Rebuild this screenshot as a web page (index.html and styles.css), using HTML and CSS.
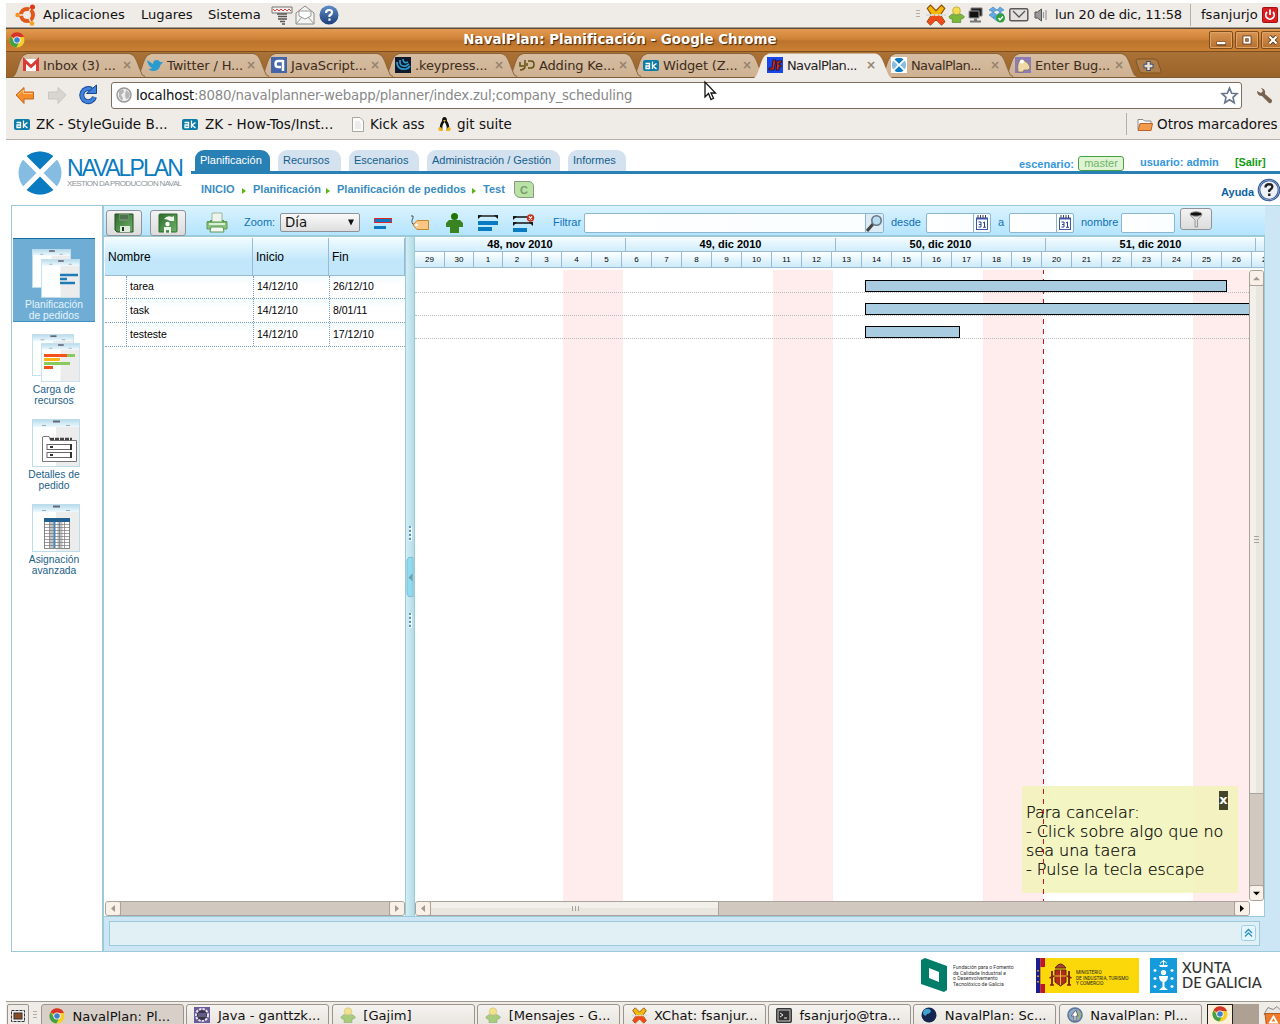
FILE: index.html
```html
<!DOCTYPE html>
<html lang="es">
<head>
<meta charset="utf-8">
<title>NavalPlan: Planificación</title>
<link rel="stylesheet" href="styles.css">
</head>
<body>
<svg class="sprite" width="0" height="0">
  <defs>
    <linearGradient id="tabFill" x1="0" y1="0" x2="0" y2="1"><stop offset="0" stop-color="#d6bda2"/><stop offset="1" stop-color="#ceb191"/></linearGradient>
    <linearGradient id="thumbHead" x1="0" y1="0" x2="0" y2="1"><stop offset="0" stop-color="#b9dcec"/><stop offset="1" stop-color="#eef9fe"/></linearGradient>
    <linearGradient id="help" x1="0" y1="0" x2="0" y2="1"><stop offset="0" stop-color="#5f8dc8"/><stop offset="1" stop-color="#1d3f7a"/></linearGradient>
    <linearGradient id="green" x1="0" y1="0" x2="1" y2="1"><stop offset="0" stop-color="#2f6a2c"/><stop offset="1" stop-color="#6fb36a"/></linearGradient>
  </defs>
  <symbol id="tab" viewBox="0 0 138 25"><path d="M0 25C5 23 6 5 12 2L15 1H121C127 1 129 8 132 16L135 23L138 25Z" fill="url(#tabFill)"/><path d="M0 24.5C5 23 6 5 12 2L15 .5H121C127 1 129 8 132 16L135 23L138 24.5" fill="none" stroke="#8a6237"/></symbol>
  <symbol id="tab-on" viewBox="0 0 138 25"><path d="M0 25C5 23 6 5 12 2L15 .5H121C127 1 129 8 132 16L135 23L138 25Z" fill="#efebe7"/></symbol>
  <symbol id="chrome" viewBox="0 0 16 16"><circle cx="8" cy="8" r="7.5" fill="#f4cf2b"/><path d="M8 8L1.5 4.2A7.5 7.5 0 0 1 15 5H8Z" fill="#d8352a"/><path d="M1.5 4.2A7.5 7.5 0 0 0 7.3 15.5L10.6 9.5L5.4 9.5Z" fill="#43a047"/><circle cx="8" cy="8" r="3.6" fill="#fff"/><circle cx="8" cy="8" r="2.8" fill="#3f7fd0"/></symbol>
  <symbol id="zk" viewBox="0 0 16 11"><rect width="16" height="11" rx="2" fill="#0b7ba8"/><path d="M2.500 3.500H6.500V8.500H3V6H6.500M9.500 1.500V9M13.500 3.500L10 6L13.500 9" fill="none" stroke="#fff" stroke-width="1.300"/></symbol>
  <symbol id="naval" viewBox="0 0 44 44"><circle cx="22" cy="22" r="21.500" fill="#85bde2"/><path d="M22 22L7 6.500A21.500 21.500 0 0 1 37 6.500ZM22 22L7 37.500A21.500 21.500 0 0 0 37 37.500Z" fill="#0a7bc0"/><path d="M5 5L39 39M39 5L5 39" stroke="#fff" stroke-width="5"/></symbol>
  <symbol id="xchat" viewBox="0 0 20 20"><path d="M2 4L5 1L10 6L15 1L18 4L14 10L18 16L15 19L10 14L5 19L2 16L6 10Z" fill="#f5b90a" stroke="#8b4a10"/><path d="M6.500 10.500H13.500L18 16L15 19L10 14L5 19L2 16Z" fill="#ee4a1c"/><path d="M1 10H19" stroke="#d8d8d8" stroke-width="2" stroke-dasharray="3 1"/></symbol>
  <symbol id="gajim" viewBox="0 0 16 16"><circle cx="8" cy="4.500" r="3.700" fill="#f3dc52" stroke="#b59b25" stroke-width=".6"/><path d="M.8 10L4 7.500Q8 10 12 7.500L15.500 10L14 12H12V15.500H4V12H2Z" fill="#7cb93a" stroke="#4f8421" stroke-width=".6"/></symbol>
  <symbol id="mail" viewBox="0 0 20 14"><rect x=".8" y=".8" width="18" height="12" rx="1.500" fill="#e4e2de" stroke="#5a5a58" stroke-width="1.500"/><path d="M4 3L10 9L16 3" fill="none" stroke="#555" stroke-width="1.300"/></symbol>
  <symbol id="sheet" viewBox="0 0 48 48"><rect x=".5" y=".5" width="47" height="47" fill="#fdfefe" stroke="#bcdcea"/><rect x="24" y="8" width="23" height="39" fill="#ececec"/><rect x="1" y="1" width="46" height="7" fill="url(#thumbHead)"/><path d="M21 2.500H28" stroke="#667" stroke-width="2"/><path d="M10 6.500H14M34 6.500H38" stroke="#9ab"/></symbol>
  <symbol id="cal" viewBox="0 0 12 15"><rect x=".5" y="3.500" width="11" height="11" fill="#fff" stroke="#3f57a6"/><path d="M0 3.500H12" stroke="#3f57a6" stroke-width="2"/><path d="M2 0V3M4.500 0V3M7 0V3M9.500 0V3" stroke="#445"/><path d="M2.500 7H5V12H2.500M3 9.500H5M7 8L8.500 7V12M7 12.300H10" fill="none" stroke="#2b418f"/></symbol>
</svg>

<header class="panel">
  <svg class="ic" width="22" height="22" viewBox="0 0 22 22"><circle cx="12" cy="11" r="6" fill="none" stroke="#e2571c" stroke-width="4"/><path d="M12 11L3 11M12 11L17 2M12 11L17 20" stroke="#efebe7" stroke-width="1.500"/><circle cx="2.500" cy="11" r="2.200" fill="#f0941e"/><circle cx="17.500" cy="3" r="2.500" fill="#d93a16"/><circle cx="17" cy="19.500" r="2.300" fill="#f3a21b"/></svg>
  <span>Aplicaciones</span><span>Lugares</span><span>Sistema</span>
  <svg class="ic" width="22" height="20" viewBox="0 0 22 20"><path d="M1 2H21V8H1Z" fill="#f3f1ee" stroke="#777"/><path d="M2 4L4 6L6 4L8 6L10 4L12 6L14 4L16 6L18 4L20 6" fill="none" stroke="#d44"/><path d="M6 9H16M7 11.500H16M7 14H16M9 16.500H14M11 19H14" stroke="#555" stroke-width="1.700"/></svg>
  <svg class="ic" width="20" height="20" viewBox="0 0 20 20"><path d="M1 8L10 1L19 8V19H1Z" fill="#f5f5f3" stroke="#8a8a88"/><path d="M4 6H16V11L10 14L4 11ZM1 19L7 12M19 19L13 12" fill="#fff" stroke="#999"/></svg>
  <svg class="ic" width="20" height="20" viewBox="0 0 20 20"><circle cx="10" cy="10" r="9.500" fill="url(#help)"/><path d="M7 8Q7 5 10 5Q13.200 5 13 7.500Q13 9 10.500 10.500V12M10.500 13.500V15.800" fill="none" stroke="#fff" stroke-width="2.200"/></svg>
  <i class="grip"></i>
  <svg class="ic" width="22" height="22"><use href="#xchat"/></svg>
  <svg class="ic" width="17" height="17"><use href="#gajim"/></svg>
  <svg class="ic" width="15" height="16" viewBox="0 0 15 16"><path d="M3 1H14V9H3Z" fill="#222" stroke="#777"/><path d="M1 4H11V11H1Z" fill="#111" stroke="#999"/><path d="M2 14.500H13M6 12.500H9" stroke="#777" stroke-width="2"/></svg>
  <svg class="ic" width="18" height="17" viewBox="0 0 18 17"><path d="M5 1L9 4L5 6L1 4ZM12 1L16 4L12 6L9 4ZM5 6L9 9L5 12L1 9ZM12 6L16 9L12 12L9 9ZM5 12L9 10L12 13L9 15Z" fill="#63abe0" stroke="#3b83bd" stroke-width=".6"/><circle cx="12.500" cy="12" r="4.500" fill="#2f9e3c"/><path d="M10.500 12L12 14L15 10.500" fill="none" stroke="#fff" stroke-width="1.400"/></svg>
  <svg class="ic" width="20" height="14"><use href="#mail"/></svg>
  <svg class="ic" width="14" height="16" viewBox="0 0 14 16"><path d="M1 5H3.500L7.500 2V14L3.500 11H1Z" fill="#999" stroke="#555"/><path d="M9.500 5V11M12 3V13" stroke="#999" stroke-width="1.200"/></svg>
  <span class="clock">lun 20 de dic, 11:58</span><i class="vsep"></i><span>fsanjurjo</span>
  <svg class="ic" width="16" height="16" viewBox="0 0 16 16"><rect x=".5" y=".5" width="15" height="15" rx="1" fill="#d81e22" stroke="#a31113"/><path d="M5 5A4.200 4.200 0 1 0 11 5M8 2.500V8" fill="none" stroke="#fff" stroke-width="1.800"/></svg>
</header>

<div class="titlebar">
  <svg class="ic" width="16" height="16"><use href="#chrome"/></svg>
  <b>NavalPlan: Planificación - Google Chrome</b>
  <svg class="winbtn" viewBox="0 0 24 18"><path d="M7 13H17.500" stroke="#5d3611" stroke-width="4.500"/><path d="M7.500 12.500H17" stroke="#fff" stroke-width="2.600"/></svg>
  <svg class="winbtn" viewBox="0 0 24 18"><rect x="9" y="6" width="6" height="6" fill="none" stroke="#5d3611" stroke-width="4"/><rect x="9" y="6" width="6" height="6" fill="none" stroke="#fff" stroke-width="2.200"/></svg>
  <svg class="winbtn" viewBox="0 0 24 18"><path d="M8 5L16 13M16 5L8 13" stroke="#5d3611" stroke-width="4.500"/><path d="M8 5L16 13M16 5L8 13" stroke="#fff" stroke-width="2.500"/></svg>
</div>

<nav class="tabs">
  <div class="tab t1"><svg class="shape"><use href="#tab"/></svg><div class="in"><svg width="16" height="12" viewBox="0 0 16 12"><rect width="16" height="12" fill="#fff"/><path d="M1.500 12V1.500L8 7.500L14.500 1.500V12" fill="none" stroke="#d93a35" stroke-width="3"/></svg><span>Inbox (3) ...</span><em>×</em></div></div>
  <div class="tab t2"><svg class="shape"><use href="#tab"/></svg><div class="in"><svg width="16" height="16" viewBox="0 0 16 16"><path d="M0 3L6 7Q6 3 10 3Q12 3 13 5L16 5L13.500 8Q12 14 6 14Q3 14 1.500 12Q4 12 5 11Q1 9 0 3Z" fill="#2a9bd0"/></svg><span>Twitter / H...</span><em>×</em></div></div>
  <div class="tab t3"><svg class="shape"><use href="#tab"/></svg><div class="in"><svg width="16" height="16" viewBox="0 0 16 16"><rect width="16" height="16" fill="#4465a8"/><path d="M12 3V14M12 4H7Q4.500 4 4.500 7Q4.500 10 7 10H10" fill="none" stroke="#fff" stroke-width="2.500"/></svg><span>JavaScript...</span><em>×</em></div></div>
  <div class="tab t4"><svg class="shape"><use href="#tab"/></svg><div class="in"><svg width="16" height="16" viewBox="0 0 16 16"><rect width="16" height="16" fill="#0e1a2c"/><path d="M2 5Q2 13 11 12Q14 11 15 9M5 3Q4 10 11 9L14 7M8 2Q8 7 13 5" fill="none" stroke="#2e9bd0" stroke-width="1.700"/></svg><span>.keypress...</span><em>×</em></div></div>
  <div class="tab t5"><svg class="shape"><use href="#tab"/></svg><div class="in"><svg width="16" height="12" viewBox="0 0 16 12"><path d="M1 3V7H5M6 1V8Q5 11 1 11M8 7V4M9 2H12Q15 2 15 5.500Q15 9 12 9H9" fill="none" stroke="#62510f" stroke-width="1.500"/></svg><span>Adding Ke...</span><em>×</em></div></div>
  <div class="tab t6"><svg class="shape"><use href="#tab"/></svg><div class="in"><svg width="16" height="11"><use href="#zk"/></svg><span>Widget (Z...</span><em>×</em></div></div>
  <div class="tab on"><svg class="shape"><use href="#tab-on"/></svg><div class="in"><svg width="16" height="16" viewBox="0 0 16 16"><rect width="16" height="16" fill="#1c45e8"/><path d="M6 3H9L7 13H2V11H5ZM10 4H15L14 6H12V8H14V10H12V13H9Z" fill="#d9271c" stroke="#111" stroke-width=".8"/></svg><span>NavalPlan...</span><em>×</em></div></div>
  <div class="tab t8"><svg class="shape"><use href="#tab"/></svg><div class="in"><svg width="16" height="16" viewBox="-2 -2 48 48"><rect x="-2" y="-2" width="48" height="48" fill="#fff"/><use href="#naval" width="44" height="44"/></svg><span>NavalPlan...</span><em>×</em></div></div>
  <div class="tab t9"><svg class="shape"><use href="#tab"/></svg><div class="in"><svg width="16" height="16" viewBox="0 0 16 16"><rect width="16" height="16" fill="#8d7bb5"/><path d="M3 15Q2 8 4 4Q7 1 10 4Q15 7 15 11Q14 14 9 13L8 15Z" fill="#efd9a8" stroke="#6b5a35" stroke-width=".6"/><circle cx="7" cy="4.500" r="2" fill="#fff"/></svg><span>Enter Bug...</span><em>×</em></div></div>
  <svg class="newtab" width="27" height="16" viewBox="0 0 27 16"><path d="M3 1H19Q22 1 23 4L26 13Q26 15 24 15H8Q5 15 4 12L1 3Q1 1 3 1Z" fill="#ad7d4b" stroke="#80551f"/><path d="M13.500 3V13M8.500 8H18.500" stroke="#45506b" stroke-width="4.500"/><path d="M13.500 4V12M9.500 8H17.500" stroke="#e8dfd5" stroke-width="2.500"/></svg>
</nav>

<div class="navrow">
  <svg class="ic" width="20" height="19" viewBox="0 0 20 19"><path d="M1 9L9 1.500V6H18.500V13H9V17.500Z" fill="#f58d2a" stroke="#c5661a"/><path d="M3 9L8.500 4V7.500H17.500" fill="none" stroke="#fbc486"/></svg>
  <svg class="ic" width="20" height="19" viewBox="0 0 20 19"><path d="M19 9L11 1.500V6H1.500V13H11V17.500Z" fill="#d9d6d2" stroke="#c9c5c0"/></svg>
  <svg class="ic" width="20" height="22" viewBox="0 0 20 22"><path d="M13.500 5.500A6.500 6.500 0 1 0 16.500 13" fill="none" stroke="#17448e" stroke-width="5"/><path d="M13.500 5.500A6.500 6.500 0 1 0 16.500 13" fill="none" stroke="#3f83dd" stroke-width="3.200"/><path d="M8.500 9.500H18.500V1Z" fill="#3f83dd" stroke="#17448e"/></svg>
  <div class="omni">
    <svg width="16" height="16" viewBox="0 0 16 16"><circle cx="8" cy="8" r="7" fill="#eee" stroke="#999" stroke-width="1.500"/><path d="M3 4L7 2L8 5L5 8L7 11L6 14L3 10ZM10 3L14 6L13 11L10 12L9 8Z" fill="#b5b5b5"/></svg>
    <span><b>localhost</b>:8080/navalplanner-webapp/planner/index.zul;company_scheduling</span>
    <svg width="17" height="17" viewBox="0 0 17 17"><path d="M8.500 1L10.700 6.200L16 6.600L12 10.300L13.200 15.700L8.500 12.800L3.800 15.700L5 10.300L1 6.600L6.300 6.200Z" fill="#fff" stroke="#66748c" stroke-width="1.600"/></svg>
  </div>
  <svg class="ic" width="17" height="17" viewBox="0 0 17 17"><path d="M1 4Q1 9 6 9L13 16Q16 17 16 13L9 7Q10 2 5 1L7 4L5 6Z" fill="#78634e"/></svg>
  <svg class="cursor" width="13" height="21" viewBox="0 0 13 21"><path d="M1 1V16L4.500 12.500L7 18.500L9.500 17.300L7 12H11.500Z" fill="#fff" stroke="#111" stroke-width="1.300"/></svg>
</div>

<div class="marks">
  <svg class="ic" width="16" height="11"><use href="#zk"/></svg><span>ZK - StyleGuide B...</span>
  <svg class="ic" width="16" height="11"><use href="#zk"/></svg><span>ZK - How-Tos/Inst...</span>
  <svg class="ic" width="12" height="15" viewBox="0 0 12 15"><path d="M.5.5H8L11.500 4V14.500H.5Z" fill="#fbfbfa" stroke="#aaa69e"/><path d="M3 5H8M3 7H9M3 9H9M3 11H9" stroke="#ddd"/></svg><span>Kick ass</span>
  <svg class="ic" width="13" height="16" viewBox="0 0 13 16"><path d="M6.500 1Q9 1 9 5Q12 9 11 14H2Q1 9 4 5Q4 1 6.500 1Z" fill="#111"/><path d="M6.500 6Q9.500 10 8.500 14H4.500Q3.500 10 6.500 6Z" fill="#fff"/><path d="M0 12L3 11L5 15H1ZM13 12L10 11L8 15H12ZM5 4H8L6.500 6Z" fill="#f0b51a"/></svg><span>git suite</span>
  <i class="vsep"></i>
  <svg class="ic" width="16" height="13" viewBox="0 0 16 13"><path d="M1 11V1.500H6L7.500 3H14V6" fill="#fff" stroke="#888"/><path d="M3 5.500H15.500L14 12.500H1Z" fill="#f49a4c" stroke="#b5642a"/></svg><span>Otros marcadores</span>
</div>

<section class="apphead">
  <div class="logo">
    <svg width="44" height="44"><use href="#naval"/></svg>
    <div><strong>NAVALPLAN</strong><small>XESTION DA PRODUCCION NAVAL</small></div>
  </div>
  <div class="menu">
    <div class="menurow">
      <a class="m sel">Planificación</a><a class="m rec">Recursos</a><a class="m esc">Escenarios</a><a class="m adm">Administración / Gestión</a><a class="m inf">Informes</a>
      <div class="user"><b>escenario:</b><span class="master">master</span><b class="usr">usuario: admin</b><b class="exit">[Salir]</b></div>
    </div>
    <div class="crumbs">
      <b>INICIO</b><i></i><b>Planificación</b><i></i><b>Planificación de pedidos</b><i></i><b>Test</b><span class="cbox">C</span>
      <b class="help">Ayuda</b>
      <svg class="helpic" width="24" height="24" viewBox="0 0 24 24"><circle cx="12" cy="12" r="10" fill="#eef2f7" stroke="#2d5190" stroke-width="2.600"/><circle cx="12" cy="12" r="10" fill="none" stroke="#9db9dd" stroke-width=".8"/><path d="M8.500 9.500Q8.500 6.200 12 6.200Q15.500 6.200 15.300 9Q15.200 10.500 12.300 12.500V14M12.300 15.500V18" fill="none" stroke="#222" stroke-width="2.400"/></svg>
    </div>
  </div>
</section>

<main class="work">
  <aside class="side">
    <a class="item current">
      <svg width="48" height="48" viewBox="0 0 48 48"><use href="#sheet" width="39" height="39"/><use href="#sheet" x="9" y="10" width="39" height="39"/><path d="M28 26H46M28 30H35M28 34H43" stroke="#1d7cb8" stroke-width="2.400"/></svg>
      <span>Planificación<br>de pedidos</span></a>
    <a class="item">
      <svg width="48" height="48" viewBox="0 0 48 48"><use href="#sheet" width="42" height="42"/><use href="#sheet" x="9" y="9" width="39" height="39"/><path d="M12 21.500H35M12 33.500H21" stroke="#f4511e" stroke-width="3"/><path d="M35 21.500H43M12 29.500H38" stroke="#8bc95f" stroke-width="3"/><path d="M12 25.500H28" stroke="#fbb517" stroke-width="3"/></svg>
      <span>Carga de<br>recursos</span></a>
    <a class="item">
      <svg width="48" height="48" viewBox="0 0 48 48"><use href="#sheet"/><path d="M10.500 42.500V18L12 17.500H17L18.500 21.500H44.500V42.500Z" fill="#fff" stroke="#777"/><path d="M18 20H40" stroke="#444" stroke-width="2.500" stroke-dasharray="4 1"/><rect x="15" y="25.500" width="24" height="5" fill="#fff" stroke="#666"/><rect x="15" y="33.500" width="24" height="5" fill="#fff" stroke="#666"/><path d="M18 28H21M18 36H21M39 25V31M39 33V39" stroke="#333" stroke-width="2"/></svg>
      <span>Detalles de<br>pedido</span></a>
    <a class="item">
      <svg width="48" height="48" viewBox="0 0 48 48"><use href="#sheet"/><rect x="12.500" y="14.500" width="25" height="30" fill="#fff" stroke="#888"/><path d="M20 18V44M28 18V44" stroke="#c4c4c4" stroke-width="5"/><path d="M22.500 18V44" stroke="#3b8bd0" stroke-width="2"/><path d="M12 20.500H38M12 23.500H38M12 26.500H38M12 29.500H38M12 32.500H38M12 35.500H38M12 38.500H38M12 41.500H38M17.500 18V44M27.500 18V44M32.500 18V44" stroke="#777" stroke-width=".7"/><rect x="12" y="14" width="26" height="4" fill="#24608f"/></svg>
      <span>Asignación<br>avanzada</span></a>
  </aside>

  <div class="content">
    <div class="tools">
      <button class="btn"><svg width="20" height="20" viewBox="0 0 20 20"><path d="M1 1H19V19H3L1 17Z" fill="url(#green)" stroke="#234d22"/><path d="M5 1H15V8H5Z" fill="#6a8f68"/><path d="M6 3H14M6 5H14" stroke="#33572f"/><path d="M6 13H16V19H6Z" fill="#dfe9dc"/><path d="M8 14H10V18H8Z" fill="#1c3a1b"/></svg></button>
      <button class="btn"><svg width="20" height="20" viewBox="0 0 20 20"><path d="M1 2Q1 1 2 1H19V18Q19 19 18 19H1Z" fill="url(#green)" stroke="#2c6a2a"/><circle cx="9.500" cy="11" r="2.200" fill="#fff"/><path d="M6 20V14H13V20H11V17H8V20ZM6 6Q9 2 14 4L16 3V8L12 8Q9 6 6 6Z" fill="#eef7ec"/></svg></button>
      <svg class="ti" width="22" height="21" viewBox="0 0 22 21"><path d="M6 1H16V11H6Z" fill="#eef3ee" stroke="#9db79b"/><path d="M1 10H5V8M21 10H17V8" fill="none" stroke="#5d9a50" stroke-width="2"/><path d="M1 10H21V17H1Z" fill="#8cc27f" stroke="#5d9a50"/><path d="M3 12H19" stroke="#d9efd4" stroke-width="2"/><path d="M5 15H17L18 20H4Z" fill="#f4f7f3" stroke="#5d9a50"/></svg>
      <span>Zoom:</span>
      <div class="select"><span>Día</span><svg width="6" height="7" viewBox="0 0 7 7"><path d="M0 0H7L3.500 7Z" fill="#111"/></svg></div>
      <svg class="ti" width="18" height="12" viewBox="0 0 18 12"><rect x=".5" y="1.500" width="17" height="4" fill="#0a7bc0" stroke="#e0242a"/><rect y="9" width="12" height="3" fill="#0a7bc0"/></svg>
      <svg class="ti" width="20" height="16" viewBox="0 0 20 16"><path d="M1 1Q4 0 3 3Q0 8 5 11Q1 8 6 9" fill="none" stroke="#555"/><path d="M3 10L7 5.500H18.500V14.500H7Z" fill="#fcc583" stroke="#c4862f"/><circle cx="6.500" cy="10" r="1.500" fill="#fff"/></svg>
      <svg class="ti" width="17" height="20" viewBox="0 0 17 20"><circle cx="8.500" cy="3.500" r="3.500" fill="#217500"/><path d="M3 7H14L17 10V14H13V20H4V14H0V10Z" fill="#398321"/></svg>
      <svg class="ti" width="20" height="17" viewBox="0 0 20 17"><path d="M0 2H20" stroke="#111" stroke-width="1.400"/><path d="M0 1.300H4L0 5ZM20 1.300H16L20 5Z" fill="#111"/><path d="M0 7H20V11H0ZM0 13H14V17H0Z" fill="#0a7bc0"/></svg>
      <svg class="ti" width="22" height="18" viewBox="0 0 22 18"><path d="M0 3H15M0 9H20" stroke="#111" stroke-width="1.400"/><path d="M0 2.300H4L0 6ZM0 8.300H4L0 12ZM20 8.300H16L20 12Z" fill="#111"/><path d="M0 14H14V18H0Z" fill="#0a7bc0"/><circle cx="17.500" cy="4" r="3.700" fill="#c4311d"/><path d="M16 2.500L19 5.500M19 2.500L16 5.500" stroke="#fff" stroke-width="1.200"/></svg>
      <span>Filtrar</span>
      <div class="field"><i></i><svg width="17" height="18" viewBox="0 0 17 18"><rect width="17" height="18" fill="#dcebf4"/><path d="M1 17L7 10" stroke="#444" stroke-width="3"/><circle cx="10.500" cy="6.500" r="4.700" fill="#b9dcf0" stroke="#667784" stroke-width="1.600"/></svg></div>
      <span>desde</span>
      <div class="field"><i></i><svg class="cal" width="12" height="15"><use href="#cal"/></svg></div>
      <span>a</span>
      <div class="field"><i></i><svg class="cal" width="12" height="15"><use href="#cal"/></svg></div>
      <span>nombre</span>
      <div class="field last"></div>
      <button class="btn funnel"><svg width="14" height="16" viewBox="0 0 14 16"><path d="M1 4L6 9V16H8.500V9L13 4Z" fill="#ddd" stroke="#888" stroke-width=".8"/><ellipse cx="7" cy="3" rx="6" ry="2.200" fill="#111" stroke="#999"/></svg></button>
    </div>

    <div class="split">
      <div class="tree">
        <div class="trow thead"><b>Nombre</b><b>Inicio</b><b>Fin</b></div>
        <div class="trow first"><i></i><span>tarea</span><span>14/12/10</span><span>26/12/10</span></div>
        <div class="trow"><i></i><span>task</span><span>14/12/10</span><span>8/01/11</span></div>
        <div class="trow"><i></i><span>testeste</span><span>14/12/10</span><span>17/12/10</span></div>
        <div class="hbar dim"><svg viewBox="0 0 14 13"><path d="M9 3V10L5 6.500Z"/></svg><u></u><svg viewBox="0 0 14 13"><path d="M5 3V10L9 6.500Z"/></svg></div>
      </div>
      <div class="splitter">
        <i class="dots"></i>
        <svg width="8" height="40" viewBox="0 0 8 40"><path d="M7 .5H2.500L1 3V37L2.500 39.500H7Z" fill="#8fdcf2" stroke="#84bdd0"/><path d="M6.500 16.500V24.500L2.500 20.500Z" fill="#6f9fae"/></svg>
        <i class="dots"></i>
      </div>
      <div class="gantt">
        <div class="weeks"><b>48, nov 2010</b><b>49, dic 2010</b><b>50, dic 2010</b><b>51, dic 2010</b><b></b></div>
        <div class="days"><i>29</i><i>30</i><i>1</i><i>2</i><i>3</i><i>4</i><i>5</i><i>6</i><i>7</i><i>8</i><i>9</i><i>10</i><i>11</i><i>12</i><i>13</i><i>14</i><i>15</i><i>16</i><i>17</i><i>18</i><i>19</i><i>20</i><i>21</i><i>22</i><i>23</i><i>24</i><i>25</i><i>26</i><i>27</i></div>
        <div class="plot">
          <div class="canvas">
            <div class="grow"><div class="bar" style="margin-left:450px;width:362px"></div></div>
            <div class="grow"><div class="bar" style="margin-left:450px;width:420px"></div></div>
            <div class="grow"><div class="bar" style="margin-left:450px;width:95px"></div></div>
            <div class="today"></div>
          </div>
          <div class="vbar"><svg viewBox="0 0 15 14"><path class="off" d="M3.500 9.500H11.500L7.500 5.500Z"/></svg><u class="thumb"></u><u class="trough"></u><svg viewBox="0 0 15 14"><path d="M3.500 5.500H11.500L7.500 9.500Z"/></svg></div>
        </div>
        <div class="hbar"><svg viewBox="0 0 14 13"><path class="off" d="M9 3V10L5 6.500Z"/></svg><u class="thumb"></u><u></u><svg viewBox="0 0 14 13"><path d="M5 3V10L9 6.500Z"/></svg></div>
        <div class="note"><em>x</em><p>Para cancelar:<br>- Click sobre algo que no<br>sea una taera<br>- Pulse la tecla escape</p></div>
      </div>
    </div>

    <div class="south"><svg width="15" height="16" viewBox="0 0 15 16"><rect x=".5" y=".5" width="14" height="15" rx="2" fill="#e6f6fe" stroke="#9ccfea"/><path d="M4 8L7.500 4.500L11 8M4 11.500L7.500 8L11 11.500" fill="none" stroke="#2c8fc4" stroke-width="1.300"/></svg></div>
  </div>
</main>

<footer class="logos">
  <svg width="27" height="34" viewBox="0 0 27 34"><path d="M0 2L4 0L26 8V32L23 34L0 26ZM8 10V20L18 24V14Z" fill="#007d68" fill-rule="evenodd"/></svg>
  <p class="fund">Fundación para o Fomento<br>da Calidade Industrial e<br>o Desenvolvemento<br>Tecnolóxico de Galicia</p>
  <div class="minist">
    <svg width="36" height="35" viewBox="0 0 36 35"><path d="M0 0H4.500V35H0Z" fill="#1b1e8c"/><path d="M4.500 0H9V35H4.500Z" fill="#c4122e"/><path d="M4.500 9H9V26H4.500Z" fill="#fbd80a"/><path d="M2 12V28" stroke="#fbd80a" stroke-width="1.500" stroke-dasharray="1.500 4"/><path d="M19 12H30V24L24.500 28L19 24Z" fill="#b22a1c" stroke="#5a2a10"/><path d="M19 10Q24.500 2 30 10Z" fill="#b5432a" stroke="#4d2c12"/><path d="M24.500 12V27M19 18H30" stroke="#e2c23a"/><path d="M16 13V27M33 13V27" stroke="#7d2e22" stroke-width="2"/><path d="M14 27H18M31 27H35M13.500 20L18 18M31 18L35.500 20" stroke="#8a1d1d" stroke-width="1.500"/></svg>
    <p>MINISTERIO<br>DE INDUSTRIA, TURISMO<br>Y COMERCIO</p>
  </div>
  <svg width="27" height="35" viewBox="0 0 27 35"><rect width="27" height="35" fill="#159bdb"/><path d="M9 18H18Q18 23 14.500 24V29L18 32H9L12.500 29V24Q9 23 9 18ZM9 7H18L17 9H10Z" fill="#fff"/><circle cx="13.500" cy="14.500" r="2.600" fill="#fff"/><path d="M10 5.500Q13.500 1 17 5.500M13.500 2V7" fill="none" stroke="#fff"/><path d="M3.500 12.500H6.500M5 11V14M3.500 20.500H6.500M5 19V22M3.500 28.500H6.500M5 27V30M20.500 12.500H23.500M22 11V14M20.500 20.500H23.500M22 19V22M20.500 28.500H23.500M22 27V30" stroke="#fff" stroke-width="1.300"/></svg>
  <p class="xunta">XUNTA<br>DE GALICIA</p>
</footer>

<nav class="taskbar">
  <a class="desk"><svg width="14" height="12" viewBox="0 0 14 12"><rect x=".5" y=".5" width="13" height="11" fill="#eee" stroke="#333" stroke-dasharray="3 1"/><rect x="3" y="3" width="8" height="6" fill="#8b4a26" stroke="#333"/></svg></a>
  <i class="grip"></i>
  <a class="task active"><svg width="16" height="16"><use href="#chrome"/></svg><span>NavalPlan: Pl...</span></a>
  <a class="task"><svg width="16" height="16" viewBox="0 0 16 16"><rect width="16" height="16" fill="#6c5b99"/><circle cx="8" cy="8" r="6" fill="#3a3450" stroke="#e8e6ee" stroke-width="2" stroke-dasharray="2.500 1"/><path d="M4 7H12M4 9H12" stroke="#8f88b5"/></svg><span>Java - ganttzk...</span></a>
  <a class="task"><svg class="faded" width="16" height="16"><use href="#gajim"/></svg><span>[Gajim]</span></a>
  <a class="task"><svg class="faded" width="16" height="16"><use href="#gajim"/></svg><span>[Mensajes - G...</span></a>
  <a class="task"><svg width="17" height="17"><use href="#xchat"/></svg><span>XChat: fsanjur...</span></a>
  <a class="task"><svg width="16" height="15" viewBox="0 0 16 15"><rect x=".8" y=".8" width="14.400" height="13.400" rx="1" fill="#ccc" stroke="#333" stroke-width="1.500"/><rect x="2.500" y="2.500" width="11" height="10" fill="#333"/><path d="M4 5L7 7L4 9M8 10H11" fill="none" stroke="#eee"/></svg><span>fsanjurjo@tra...</span></a>
  <a class="task"><svg width="16" height="16" viewBox="0 0 16 16"><circle cx="8" cy="8" r="7.500" fill="#14254f"/><path d="M3 3Q8 0 10 4Q9 7 6 7Q5 10 3 8Q1 6 3 3Z" fill="#3fa2cf"/></svg><span>NavalPlan: Sc...</span></a>
  <a class="task"><svg width="16" height="16" viewBox="0 0 16 16"><circle cx="8" cy="8" r="7" fill="#8fa9c9" stroke="#5b7599" stroke-width="1.500"/><path d="M9 3L4 9H7V14H9V9H11Z" fill="#fff" stroke="#667"/><path d="M11 4L13 8L11 12" fill="none" stroke="#9bbd5a" stroke-width="1.500"/></svg><span>NavalPlan: Pl...</span></a>
  <div class="spaces"><a><svg width="16" height="16"><use href="#chrome"/></svg></a><a></a></div>
  <svg class="ic" width="18" height="21" viewBox="0 0 18 21"><path d="M1 7L4 2L9 4L13 1L18 6V9H0Z" fill="#e5e5e3" stroke="#888"/><path d="M1 8H18V21H2.500Z" fill="#ef7a2b" stroke="#b9591a"/><path d="M6 17L9.500 11L13 17Z" fill="none" stroke="#fff" stroke-width="1.800"/></svg>
</nav>
</body>
</html>
```
FILE: styles.css
```css
* { box-sizing: border-box; }
body {
  margin: 0; width: 1280px; height: 1024px; padding: 3px 0 0 6px; overflow: hidden;
  background: #fff; color: #111; font: 13.33px/18px "DejaVu Sans", sans-serif;
  display: flex; flex-direction: column;
}
body > * { flex: none; }
svg { display: block; flex: none; overflow: visible; }
svg.sprite { position: absolute; }
p { margin: 0; }
i, em { font-style: normal; }
span, b { white-space: nowrap; }
button { font: inherit; }

/* desktop panel */
.panel {
  height: 26px; padding: 0 0 2px 9px; background: #efebe7; border-bottom: 1px solid #5a4a3a; box-shadow: inset 0 -1px #a59d94;
  display: grid; align-items: center; overflow: hidden;
  grid-template-columns: 28px 98px 67px 63px 24px 24px 597px 9px 23px 20px 20px 21px 25px 21px 135px 11px 61px 18px;
  font-size: 13.1px;
}
.clock { letter-spacing: -.2px; }
.grip { width: 4px; height: 9px; background: repeating-linear-gradient(#b5ada4 0 1px, transparent 1px 3px); }
.vsep { width: 1px; height: 22px; background: #b9aea2; }

/* window title */
.titlebar {
  height: 23px; padding: 0 0 0 3px; border-bottom: 1px solid #7e4e1e;
  background: linear-gradient(#e39a50, #cf8338 45%, #bb732c 55%, #ca8033);
  display: grid; grid-template-columns: 20px 1182px 26px 26px 26px; align-items: center;
}
.titlebar b { text-align: center; color: #fff; font-size: 13.45px; line-height: 16px; text-shadow: 1px 1px 1px #3d2408; }
.winbtn { width: 24px; height: 18px; margin-left: -2px; border: 1px solid #7c4c1c; border-radius: 2px; background: linear-gradient(#d99352, #b4702e); box-shadow: inset 0 0 0 1px #e0a468; }

/* tabs */
.tabs { height: 26px; padding: 1px 0 0 4px; display: flex; background: linear-gradient(#ab7237, #9a6329); border-bottom: 1px solid #7e5a35; }
.tab { width: 138px; height: 25px; margin-right: -14px; flex: none; display: grid; }
.shape, .in { grid-area: 1 / 1; }
.shape { width: 138px; height: 24px; }
.in { height: 24px; padding-left: 13px; display: grid; grid-template-columns: 20px 79px 12px; align-items: center; color: #3d2c1b; }
.in span { font-size: 13px; padding-top: 1px; }
.in em { font-size: 12px; color: #94836f; line-height: 16px; font-weight: bold; }
.t1 { z-index: 9; } .t2 { z-index: 8; } .t3 { z-index: 7; } .t4 { z-index: 6; } .t5 { z-index: 5; } .t6 { z-index: 4; }
.in span { letter-spacing: -.15px; }
.on { z-index: 10; } .on .shape { height: 25px; } .on .in { color: #222; }
.t8 { z-index: 3; } .t9 { z-index: 2; }
.on span, .t8 span { letter-spacing: -.6px; }
.newtab { margin: 5px 0 0 9px; }

/* address bar */
.navrow {
  position: relative; height: 34px; padding-left: 9px; background: #efebe7;
  display: grid; grid-template-columns: 32px 31px 33px 1131px 14px 20px; align-items: center;
}
.navrow > .omni { grid-column: 4; }
.navrow > .ic:nth-last-child(2) { grid-column: 6; }
.omni {
  height: 27px; padding: 0 4px; background: #fff; border: 1px solid #7d6e5f; border-radius: 3px;
  display: grid; grid-template-columns: 20px 1fr 16px; align-items: center; color: #888; font-size: 13.33px; letter-spacing: -.21px;
}
.omni span { padding-top: 1px; }
.omni b { font-weight: normal; color: #111; }
.cursor { position: absolute; left: 698px; top: 3px; }
.marks {
  height: 28px; padding: 0 0 3px 8px; background: #efebe7; border-bottom: 1px solid #b5b0aa;
  display: grid; grid-template-columns: 22px 146px 23px 147px 18px 68px 19px 669px 11px 20px 130px; align-items: center;
  font-size: 13.5px;
}
.marks span { line-height: 16px; padding-bottom: 1px; }

/* application header */
.apphead { height: 65px; display: flex; font-family: "Liberation Sans", sans-serif; }
.logo { flex: none; width: 185px; padding: 11px 0 0 12px; display: flex; gap: 5px; }
.logo div { display: flex; flex-direction: column; }
.logo strong { margin-top: 5px; font: 23px/25px "Liberation Sans", sans-serif; color: #0a7bc0; letter-spacing: -1.9px; }
.logo small { font-size: 8px; line-height: 6px; color: #8d9499; letter-spacing: -.66px; white-space: nowrap; }
.menu { flex: none; width: 1089px; }
.menurow { height: 34px; padding: 10px 0 0 4px; border-bottom: 3px solid #2980b5; display: flex; gap: 8px; }
.m { flex: none; height: 21px; padding-left: 5px; border-radius: 9px 9px 0 0; background: #d4e1ee; color: #12608e; font-size: 11px; line-height: 20px; white-space: nowrap; }
.sel { width: 75px; background: #2980b5; color: #fff; }
.rec { width: 63px; } .esc { width: 70px; } .adm { width: 133px; } .inf { width: 58px; }
.user { flex: none; padding-left: 385px; display: grid; grid-template-columns: 59px 62px 95px 40px; align-items: center; font-size: 11px; color: #3497db; }
.user > b:first-child { padding-top: 5px; }
.master { width: 46px; height: 15px; margin-top: 4px; border: 1px solid #43a047; border-radius: 3px; background: #e0f3d3; color: #6db56b; line-height: 13px; text-align: center; }
.exit { color: #109c10; letter-spacing: -.1px; }
.usr, .exit { padding-top: 1px; }
.crumbs {
  height: 31px; padding-left: 10px; display: grid; align-items: center; color: #3a8cbf; font-size: 11px;
  grid-template-columns: 41px 11px 73px 11px 135px 11px 31px 707px 37px 24px;
}
.crumbs b { margin-top: -2px; }
.crumbs i { width: 0; height: 0; border-left: 4px solid #59b813; border-top: 3px solid transparent; border-bottom: 3px solid transparent; margin-top: 3px; }
.cbox { width: 20px; height: 17px; border: 1px solid #8a9a84; border-radius: 0 5px 0 6px; background: #b9e3a4; color: #7c9a70; font-weight: bold; text-align: center; line-height: 16px; }
.crumbs .help { color: #0a62a8; padding-top: 5px; margin-top: 0; }
.helpic { margin-left: -1px; }

/* workspace frame */
.work { height: 747px; margin-left: 5px; display: flex; border: solid #9ccad8; border-width: 1px 0 1px 1px; background: #fff; font-family: "Liberation Sans", sans-serif; }
.side { width: 90px; padding: 32px 0 0 1px; }
.item { width: 82px; height: 85px; padding: 11px 0 0; display: flex; flex-direction: column; align-items: center; gap: 2px; color: #1d6187; font-size: 10.3px; line-height: 11px; text-align: center; }
.item svg { margin-left: 4px; }
.item.current { height: 84px; margin-bottom: 1px; background: #6fadd4; color: #e4f3fc; border-top: 1px solid #176c9e; border-bottom: 1px solid #3f8fc0; padding-top: 10px; }
.content { flex: 1; border-left: 2px solid #9ccad8; background: #cde6f5; display: flex; flex-direction: column; }

.tools {
  width: 1161px; height: 31px; padding-left: 2px; border-bottom: 2px solid #9ccad8; background: linear-gradient(#daf3fe, #b4e4ff);
  display: grid; align-items: center; font-size: 11px; color: #0f70b7;
  grid-template-columns: 44px 56px 38px 36px 94px 36px 36px 32px 35px 40px 31px 307px 35px 72px 11px 72px 40px 59px 32px;
}
.tools > span { padding-top: 2px; }
.tools .ti { margin-top: 3px; }
.btn { width: 36px; height: 26px; padding: 0; border: 1px solid #8f9399; border-radius: 3px; background: linear-gradient(#f3f3f3, #dcdcdc); display: flex; align-items: center; justify-content: center; margin-top: 4px; align-self: start; }
.funnel { width: 32px; height: 22px; margin-top: 2px; }
.select { width: 80px; height: 19px; margin-top: 3px; padding: 0 5px 0 4px; border: 1px solid #8f9399; border-radius: 2px; background: linear-gradient(#fafafa, #dedede); display: flex; align-items: center; justify-content: space-between; color: #111; font: 13.33px/16px "DejaVu Sans", sans-serif; }
.field { height: 20px; margin: 3px 7px 0 0; border: 1px solid #8db5cd; border-radius: 2px; background: linear-gradient(90deg, #fff, #f8fdff); display: flex; }
.field i { flex: 1; border-right: 1px solid #8db5cd; }
.field .cal { margin: 1px 2px; }
.last { width: 54px; }

.split { width: 1161px; height: 680px; display: flex; background: #fff; border-right: 1px solid #9ccad8; border-bottom: 1px solid #9ccad8; }
.tree { width: 301px; padding: 1px 0 0 1px; display: flex; flex-direction: column; }
.trow { height: 24px; display: grid; grid-template-columns: 21px 127px 76px 76px; align-items: stretch; border-bottom: 1px dotted #7d9fb8; font-size: 10.5px; line-height: 22px; color: #000; }
.trow span { padding-left: 3px; border-left: 1px dotted #7d9fb8; background: linear-gradient(#f2fbfe, #fff 40%); }
.trow.first { height: 23px; line-height: 21px; }
.thead { height: 38px; grid-template-columns: 148px 76px 76px; border-bottom: 1px solid #9ab9d4; background: linear-gradient(#f1fcff, #c2e7fb 60%); font-size: 12px; line-height: 38px; }
.thead b { font-weight: normal; padding-left: 3px; border-right: 1px solid #9ab9d4; }
.hbar { margin-top: auto; height: 15px; display: flex; border: 1px solid #a9a39b; border-radius: 3px; background: #d1c8bf; }
.hbar u { flex: 1; border: solid #a9a39b; border-width: 0 1px; }
.hbar .thumb + u { border-left: 0; }
.hbar svg { width: 14px; height: 13px; background: #f9f1e8; border-radius: 2px; }
.hbar .thumb { flex: none; width: 289px; background: linear-gradient(90deg, transparent 141px, #a9a39b 141px 142px, transparent 142px 144px, #a9a39b 144px 145px, transparent 145px 147px, #a9a39b 147px 148px, transparent 148px) 0 4px / 100% 5px no-repeat, linear-gradient(#f3f0ec 50%, #e9e5df 50%); }
.dim path, path.off { fill: #a09a92; }
.splitter { width: 10px; border: solid #9ccad8; border-width: 0 1px; background: linear-gradient(90deg, #d3edf3, #b3dde8); display: flex; flex-direction: column; align-items: center; justify-content: center; gap: 16px; }
.splitter svg { margin-left: -1px; }
.dots { width: 3px; height: 15px; background: linear-gradient(90deg, transparent 2px, #f2fbfd 2px), repeating-linear-gradient(#5a96b3 0 2px, #f2fbfd 2px 3px, transparent 3px 4px); }

.gantt { position: relative; width: 849px; margin-top: 1px; display: flex; flex-direction: column; }
.weeks, .days { display: grid; overflow: hidden; text-align: center; color: #000; background: linear-gradient(#f3fbff, #d0edfa); }
.weeks { height: 14px; grid-template-columns: 211px 210px 210px 210px 8px; font-size: 11px; line-height: 13px; border-bottom: 1px solid #9ab9d4; }
.weeks b, .days i { border-right: 1px solid #9ab9d4; }
.weeks b:last-child { border: 0; }
.days { height: 16px; grid-template-columns: 30px 29px 29px 29px repeat(25, 30px); font-size: 8px; line-height: 15px; border-bottom: 1px solid #9ab9d4; background: linear-gradient(#fdffff, #cdebfa); }
.plot { margin-top: 2px; height: 631px; display: flex; }
.canvas { position: relative; width: 834px; overflow: hidden; background: linear-gradient(90deg, #ffeded 60px, transparent 60px) 148px 0 / 210px 100% repeat-x; }
.grow { height: 23px; padding-top: 10px; border-bottom: 1px dotted #bbb; }
.bar { position: relative; z-index: 4; height: 12px; background: #a9cce1; border: 1px solid #000; }
.today { position: absolute; z-index: 3; left: 628px; top: -1px; bottom: 0; width: 1px; background: repeating-linear-gradient(#d8141c 0 5px, transparent 5px 10px); }
.vbar { width: 15px; display: flex; flex-direction: column; border: 1px solid #a9a39b; border-radius: 3px; background: #d1c8bf; }
.vbar svg { width: 13px; height: 14px; background: #f9f1e8; border-radius: 2px; }
.vbar u { border: solid #a9a39b; border-width: 1px 0 0; }
.vbar .thumb { height: 508px; background: linear-gradient(transparent 250px, #a9a39b 250px 251px, transparent 251px 253px, #a9a39b 253px 254px, transparent 254px 256px, #a9a39b 256px 257px, transparent 257px) 4px 0 / 5px 100% no-repeat, linear-gradient(90deg, #f3f0ec 50%, #e9e5df 50%); }
.vbar .trough { flex: 1; border-bottom-width: 1px; }
.gantt > .hbar { width: 835px; }
.note { position: absolute; z-index: 2; left: 607px; top: 548px; width: 216px; height: 107px; padding: 17px 0 0 4px; background: rgba(240, 243, 180, .8); font: 200 16px/19px "DejaVu Sans", sans-serif; color: #000; -webkit-text-stroke: .2px #000; }
.note p { white-space: nowrap; }
.note em { position: absolute; right: 10px; top: 5px; width: 9px; height: 19px; background: #45452c; color: #fff; font-weight: bold; font-size: 13px; line-height: 18px; text-align: center; -webkit-text-stroke: 0; }

.south { width: 1151px; height: 25px; margin: 4px 0 0 5px; padding: 3px 3px 0 0; border: 1px solid #9ccad8; background: #e0f0f5; display: flex; justify-content: flex-end; }

/* sponsor logos */
.logos { height: 49px; padding: 6px 0 0 915px; display: grid; grid-template-columns: 32px 83px 114px 32px 90px; align-items: start; font-family: Roboto, sans-serif; }
.fund { padding-top: 7px; font-size: 5.1px; line-height: 5.6px; color: #333; white-space: nowrap; }
.minist { width: 103px; height: 35px; background: #fbd80a; display: flex; gap: 4px; }
.minist p { padding-top: 12px; font-size: 4.7px; line-height: 5.7px; color: #222; white-space: nowrap; }
.xunta { font: 500 14.7px/15px Lato, sans-serif; color: #333; white-space: nowrap; padding-top: 2px; }

/* task list */
.taskbar { height: 24px; padding-left: 1px; border-top: 1px solid #a09a92; background: #efebe7; display: grid; grid-template-columns: 27px 7px repeat(8, 145.4px) 60px 20px; padding-top: 2px; }
.taskbar > * { height: 24px; }
.desk { width: 22px; border: 1px solid #9b948b; border-radius: 2px; display: flex; justify-content: center; padding-top: 5px; }
.taskbar .grip { height: 9px; margin-top: 7px; margin-left: -1px; }
.task { width: 143px; padding: 0 0 0 7px; border: 1px solid #9b948b; border-radius: 3px; background: linear-gradient(#f5f3f0, #e8e4de); display: grid; grid-template-columns: 23.5px 1fr; align-items: center; font-size: 13.1px; }
.task svg { margin-top: -2px; }
.task span { margin-top: -1px; }
.active { background: #d8d0c8; }
.active svg { margin-top: 0; }
.active span { margin-top: 0; padding-top: 1px; }
.faded { opacity: .6; }
.spaces { width: 52px; margin-left: 3px; display: grid; grid-template-columns: 26px 26px; background: #aea092; }
.spaces a:first-child { background: #fcf0dc; border: 1px solid #222; padding: 1px 0 0 4px; }
```
